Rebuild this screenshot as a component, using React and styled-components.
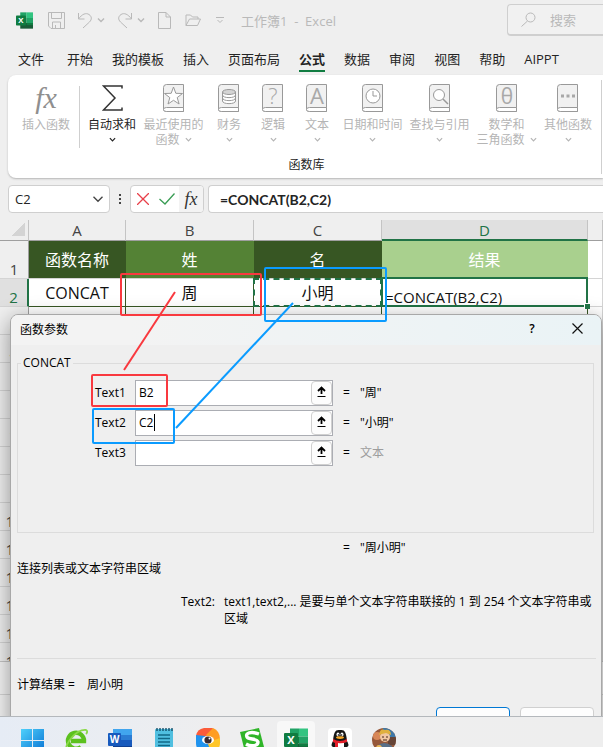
import React from 'react'
import styled, { createGlobalStyle, css } from 'styled-components'

const GlobalStyle = createGlobalStyle`
  * {
    box-sizing: border-box;
  }
  body {
    margin: 0;
    overflow: hidden;
    background: #efefef;
    color: #242424;
    font-family: 'Open Sans', 'Noto Sans CJK SC', sans-serif;
    font-size: 12px;
  }
  button, input {
    font: inherit;
    color: inherit;
  }
  svg {
    display: block;
    flex: none;
  }
`

const Desktop = styled.div`
  height: 100vh;
  display: flex;
  flex-direction: column;
`

const Workbook = styled.main`
  position: relative;
  flex: 1;
  min-height: 0;
  overflow: hidden;
  display: flex;
  flex-direction: column;
`

/* title bar */

const TitleBar = styled.header`
  display: flex;
  align-items: center;
  flex: none;
  height: 40px;
  padding-left: 16px;
  color: #b9b9b9;
`

const QuickButton = styled.button`
  display: flex;
  align-items: center;
  justify-content: center;
  flex: none;
  width: ${({ $width }) => $width || 24}px;
  height: 24px;
  padding: 0;
  border: 0;
  background: none;
`

const SplitButton = styled.span`
  display: flex;
  align-items: center;
  margin-left: 8px;
`

const AppIcon = styled.span`
  margin-right: 15px;
`

const DocTitle = styled.h1`
  margin: 0 0 0 4px;
  flex: 1;
  font-size: 13px;
  font-weight: 400;
  white-space: pre;
`

const Search = styled.label`
  display: flex;
  align-items: center;
  gap: 14px;
  flex: none;
  width: 96px;
  height: 32px;
  padding-left: 13px;
  border: 1px solid #cfcfcf;
  border-right: 0;
  border-bottom-width: 2px;
  border-radius: 4px 0 0 4px;
  background: #f1f1f1;
  input {
    width: 50px;
    padding: 0;
    border: 0;
    outline: 0;
    background: none;
    font-size: 13px;
  }
  input::placeholder {
    color: #b9b9b9;
  }
`

/* ribbon */

const Tabs = styled.nav`
  display: flex;
  flex: none;
  gap: 19px;
  height: 35px;
  padding: 6px 0 0 18px;
  white-space: nowrap;
`

const Tab = styled.a`
  height: 26px;
  line-height: 26px;
  font-size: 13px;
  color: #242424;
  text-decoration: none;
  ${({ $first }) => $first && 'margin-right: 4px;'}
  ${({ $active }) =>
    $active &&
    css`
      font-weight: 700;
      border-bottom: 2px solid #107c41;
    `}
`

const Ribbon = styled.section`
  flex: none;
  height: 103px;
  margin-left: 8px;
  padding: 5px 1px 4px 10px;
  border-radius: 8px 0 0 8px;
  background: #fff;
  box-shadow: 0 1px 2px #b5b5b5;
`

const RibbonGroup = styled.div`
  display: flex;
  flex-direction: column;
  justify-content: space-between;
  height: 100%;
  padding-top: 3px;
  border-right: 1px solid #cfcfcf;
`

const Commands = styled.div`
  display: flex;
`

const Divider = styled.span`
  width: 1px;
  height: 62px;
  margin: 3px 4px 0 5px;
  background: #cfcfcf;
`

const Command = styled.button`
  display: flex;
  flex-direction: column;
  align-items: center;
  flex: none;
  width: ${({ $width }) => $width}px;
  padding: 0;
  border: 0;
  background: none;
  line-height: 15px;
  white-space: nowrap;
  color: ${({ $enabled }) => ($enabled ? '#242424' : '#b5b5b5')};
`

const CommandIcon = styled.span`
  display: flex;
  align-items: center;
  justify-content: center;
  height: 30px;
  margin-bottom: 4px;
`

const CommandLine = styled.span`
  display: flex;
  align-items: center;
  gap: 5px;
  height: 15px;
`

const Fx = styled.span`
  font-family: 'Liberation Serif', serif;
  font-style: italic;
  font-size: ${({ $size }) => $size}px;
  line-height: 1;
  color: ${({ $color }) => $color};
`

const GroupName = styled.span`
  padding-right: 6px;
  text-align: center;
  line-height: 18px;
`

/* formula bar */

const FormulaBar = styled.section`
  display: flex;
  flex: none;
  height: 28px;
  margin: 7px 0 7px 8px;
`

const NameBox = styled.label`
  display: flex;
  align-items: center;
  width: 102px;
  padding: 0 5px 0 6px;
  border: 1px solid #cfcfcf;
  border-radius: 4px;
  background: #fff;
  input {
    flex: 1;
    min-width: 0;
    padding: 0;
    border: 0;
    outline: 0;
    font-size: 13px;
    background: none;
  }
`

const Grip = styled.span`
  display: flex;
  flex-direction: column;
  align-items: center;
  justify-content: center;
  gap: 2px;
  width: 20px;
  i {
    width: 2px;
    height: 2px;
    background: #444;
  }
`

const EntryButtons = styled.div`
  display: flex;
  width: 74px;
  margin-right: 4px;
  border: 1px solid #cfcfcf;
  border-radius: 4px;
  overflow: hidden;
  background: #fff;
`

const EntryButton = styled.button`
  display: flex;
  align-items: center;
  justify-content: center;
  flex: 1;
  padding: 0;
  border: 0;
  background: ${({ $hover }) => ($hover ? '#f3f3f3' : 'none')};
`

const FormulaInput = styled.input`
  flex: 1;
  min-width: 0;
  padding: 0 11px;
  border: 1px solid #cfcfcf;
  border-right: 0;
  border-radius: 4px 0 0 4px;
  outline: 0;
  background: #fff;
  && {
    font-family: Lato, sans-serif;
    font-size: 14px;
    font-weight: 700;
  }
`

/* sheet */

const SheetArea = styled.div`
  flex: 1;
  min-height: 0;
  overflow: hidden;
`

const Sheet = styled.table`
  width: 100%;
  table-layout: fixed;
  border-collapse: separate;
  border-spacing: 0;
  background: #fff;
  font-size: 16px;
`

const Col = styled.col`
  width: ${({ $width }) => $width}px;
`

const ColumnHead = styled.th`
  height: 21px;
  padding: 0;
  line-height: 18px;
  font-size: 15px;
  font-weight: 400;
  color: ${({ $active }) => ($active ? '#217346' : '#444')};
  background: ${({ $active }) => ($active ? '#e0e0e0' : '#efefef')};
  border-right: 1px solid #c4c4c4;
  border-bottom: ${({ $active }) => ($active ? '2px solid #217346' : '1px solid #9f9f9f')};
`

const Corner = styled(ColumnHead)`
  background: linear-gradient(135deg, transparent 50%, #d4d4d4 50%) 12px 3px / 13px 13px no-repeat #efefef;
`

const RowHead = styled.th`
  height: ${({ $height }) => $height || 28}px;
  padding: 0;
  vertical-align: bottom;
  line-height: 17px;
  font-size: 15px;
  font-weight: 400;
  color: ${({ $active }) => ($active ? '#217346' : '#444')};
  background: ${({ $active }) => ($active ? '#e0e0e0' : '#efefef')};
  border-bottom: 1px solid #d4d4d4;
  border-right: ${({ $active }) => ($active ? '2px solid #217346' : '1px solid #9f9f9f')};
`

const Cell = styled.td`
  position: relative;
  padding: 0;
  text-align: ${({ $align }) => $align || 'center'};
  line-height: 20px;
  white-space: nowrap;
  color: ${({ $fill }) => ($fill ? '#fff' : '#111')};
  background: ${({ $fill }) => $fill || '#fff'};
  border-right: 1px solid ${({ $ruled, $fill }) => $fill || ($ruled ? '#375623' : '#d4d4d4')};
  border-bottom: 1px solid ${({ $ruled }) => ($ruled ? '#375623' : '#d4d4d4')};
  ${({ $copied }) =>
    $copied &&
    css`
      &::after {
        content: '';
        position: absolute;
        inset: -1px;
        border: 2px dashed #217346;
      }
    `}
  ${({ $editing }) =>
    $editing &&
    css`
      padding: 8px 0 0 3px;
      line-height: 18px;
      font-size: 15px;
      &::after {
        content: '';
        position: absolute;
        inset: -2px -1px -1px;
        border: 2px solid #217346;
      }
    `}
`

const FillHandle = styled.i`
  position: absolute;
  right: -3px;
  bottom: -3px;
  z-index: 1;
  width: 6px;
  height: 6px;
  border: 1px solid #fff;
  border-width: 1px 0 0 1px;
  background: #217346;
`

const StatusArea = styled.footer`
  flex: none;
  height: 55px;
  background: linear-gradient(#d4d4d4, #d4d4d4) 0 32px / 100% 1px no-repeat #f3f3f3;
  border-top: 1px solid #c4c4c4;
`

/* dialog */

const Dialog = styled.form`
  position: absolute;
  top: 314px;
  left: 10px;
  right: 1px;
  border: 1px solid #a8a8a8;
  border-radius: 8px 8px 0 0;
  background: #efefef;
  box-shadow: 0 6px 22px rgba(0, 0, 0, 0.4);
  overflow: hidden;
  color: #000;
`

const DialogTitle = styled.div`
  display: flex;
  align-items: center;
  height: 30px;
  padding: 0 18px 3px 9px;
  background: linear-gradient(90deg, #f3f3f3 20%, #eaf3f6);
  h2 {
    flex: 1;
    margin: 0;
    font-size: 12px;
    font-weight: 400;
  }
`

const TitleButton = styled.button`
  display: flex;
  align-items: center;
  justify-content: center;
  width: 12px;
  height: 20px;
  margin-left: 33px;
  padding: 0;
  border: 0;
  background: none;
  font-weight: 600;
`

const DialogBody = styled.div`
  padding: 9px 7px 0 6px;
`

const ArgGroup = styled.fieldset`
  height: 179px;
  min-width: 0;
  margin: 0;
  padding: 8px 0 0 77px;
  border: 1px solid #dcdcdc;
  legend {
    margin-left: -74px;
    padding: 0 2px;
    line-height: 18px;
  }
`

const ArgRow = styled.div`
  display: flex;
  align-items: center;
  height: 26px;
  margin-bottom: 4px;
  padding-bottom: 2px;
  label {
    width: 40px;
  }
`

const RefBox = styled.div`
  position: relative;
  display: flex;
  width: 198px;
  height: 26px;
  margin-bottom: -2px;
  border: 1px solid #abadb3;
  background: #fff;
  input {
    flex: 1;
    min-width: 0;
    padding: 0 3px 2px;
    border: 0;
    outline: 0;
    background: none;
  }
`

const Caret = styled.i`
  position: absolute;
  left: 18px;
  top: 3px;
  width: 1px;
  height: 17px;
  background: #000;
`

const PickButton = styled.button`
  display: flex;
  align-items: center;
  justify-content: center;
  width: 21px;
  padding: 0 0 3px;
  border: 1px solid #d0d0d0;
  border-radius: 4px;
  background: #fdfdfd;
`

const Equals = styled.span`
  width: 17px;
  margin-left: 10px;
`

const ArgValue = styled.output`
  color: ${({ $muted }) => ($muted ? '#9d9d9d' : '#000')};
`

const ResultRow = styled.div`
  display: flex;
  height: 18px;
  margin-top: 6px;
  padding-left: 316px;
  line-height: 18px;
`

const Description = styled.p`
  margin: 3px 0 15px;
  line-height: 18px;
`

const ArgHelp = styled.dl`
  display: flex;
  gap: 9px;
  height: 66px;
  margin: 0 -2px 0 0;
  padding-left: 164px;
  border-bottom: 1px solid #dcdcdc;
  line-height: 17px;
  dt {
    flex: none;
  }
  dd {
    margin: 0;
  }
`

const Outcome = styled.p`
  display: flex;
  gap: 12px;
  margin: 17px 0 13px;
  line-height: 18px;
`

const DialogActions = styled.div`
  display: flex;
  justify-content: flex-end;
  gap: 10px;
`

const ActionButton = styled.button`
  width: 74px;
  height: 24px;
  border: 1px solid ${({ $primary }) => ($primary ? '#0078d4' : '#d0d0d0')};
  border-radius: 4px;
  background: #fdfdfd;
`

const Annotations = styled.svg`
  position: absolute;
  top: 0;
  left: 0;
  fill: none;
  stroke-width: 2;
  stroke-linejoin: round;
  pointer-events: none;
`

/* taskbar */

const Taskbar = styled.nav`
  display: flex;
  align-items: flex-start;
  flex: none;
  gap: 6px;
  height: 31px;
  padding: 4px 0 0 13px;
  overflow: hidden;
  border-top: 1px solid #b4b8bc;
  background: linear-gradient(90deg, #e6ecf5, #eeeeef 35%, #eeeeee);
`

const TaskButton = styled.button`
  display: flex;
  justify-content: center;
  flex: none;
  width: 38px;
  height: 38px;
  padding: 7px 0 0;
  border: 0;
  border-radius: 4px;
  background: ${({ $active }) => ($active ? '#f8f8f8' : 'none')};
`

const Chevron = ({ color = 'currentColor', size = 7, weight = 1.4 }) => (
  <svg width={size} height={size} viewBox="0 0 8 8" fill="none" stroke={color} strokeWidth={weight}>
    <path d="M1 2.5l3 3 3-3" />
  </svg>
)

const ExcelIcon = ({ size }) => (
  <svg width={size} height={size} viewBox="0 0 24 24">
    <path d="M6 .5h9v8H6z" fill="#21a366" />
    <path d="M15 .5h9v8h-9z" fill="#33c481" />
    <path d="M6 8.500h9v7H6z" fill="#107c41" />
    <path d="M15 8.500h9v7h-9z" fill="#21a366" />
    <path d="M6 15.500h18v8H6z" fill="#185c37" />
    <path d="M15 15.500h9v3h-9z" fill="#107c41" />
    <rect x="0" y="5" width="14" height="14" rx="1" fill="#107c41" />
    <text x="7" y="16" textAnchor="middle" fontFamily="Open Sans" fontWeight="700" fontSize="11" fill="#fff">
      X
    </text>
  </svg>
)

const WordIcon = () => (
  <svg width="24" height="24" viewBox="0 0 24 24">
    <path d="M5 1h19v6H5z" fill="#41a5ee" />
    <path d="M5 7h19v5H5z" fill="#2b7cd3" />
    <path d="M5 12h19v6H5z" fill="#185abd" />
    <path d="M5 18h19v5H5z" fill="#103f91" />
    <rect x="0" y="5" width="13" height="13" rx="1" fill="#185abd" />
    <text x="6.5" y="15" textAnchor="middle" fontFamily="Open Sans" fontWeight="700" fontSize="10" fill="#fff">
      W
    </text>
  </svg>
)

const StartIcon = () => (
  <svg width="24" height="24" viewBox="0 0 24 24">
    <defs>
      <linearGradient id="start" x1="0" y1="0" x2="1" y2="1">
        <stop offset="0" stopColor="#4fd0fb" />
        <stop offset="1" stopColor="#0a74d4" />
      </linearGradient>
    </defs>
    <path d="M1 1h11v11H1zM13 1h11v11H13zM1 13h11v11H1zM13 13h11v11H13z" fill="url(#start)" />
  </svg>
)

const BrowserIcon = () => (
  <svg width="24" height="24" viewBox="0 0 24 24" fill="none">
    <path d="M7 13h13a8 8 0 1 0-3 6" stroke="#5cc11f" strokeWidth="4.4" />
    <path d="M3 22C-1 18 12 1 22 2c2 1 1 3 0 4" stroke="#8bd94a" strokeWidth="1.8" />
  </svg>
)

const NotesIcon = () => (
  <svg width="24" height="24" viewBox="0 0 24 24" fill="none">
    <rect x="3" y="1" width="18" height="22" rx="1" fill="#50bfe0" />
    <path d="M5 0v3M8 0v3M11 0v3M14 0v3M17 0v3M20 0v3" stroke="#14506b" strokeWidth="1.4" />
    <path d="M6 7h12M6 10.5h12M6 14h12M6 17.5h12" stroke="#116987" strokeWidth="1.3" />
  </svg>
)

const EyeIcon = () => (
  <svg width="24" height="24" viewBox="0 0 24 24">
    <path d="M8 0h9l-4 9-13-1q1-7 8-8z" fill="#fb5b3a" />
    <path d="M17 0q7 3 7 11l-10 3-4-7z" fill="#ff9d22" />
    <path d="M24 10v6q-1 8-9 8l-5-9z" fill="#ffc629" />
    <path d="M0 7l9 1 6 16H8q-8-1-8-9z" fill="#2093ee" />
    <ellipse cx="12" cy="12" rx="6" ry="4" fill="#fff" />
    <circle cx="12" cy="12" r="3.6" fill="#392b31" />
    <circle cx="13.5" cy="10.5" r="1" fill="#fff" />
  </svg>
)

const SIcon = () => (
  <svg width="24" height="24" viewBox="0 0 24 24" fill="none">
    <path d="M0 4L19 0l5 19-19 5z" fill="#2fb528" />
    <path d="M19 6C11 3 5 5 7 9c2 3 10 1 11 5 0 4-7 5-12 2" stroke="#fff" strokeWidth="3.4" />
  </svg>
)

const PenguinIcon = () => (
  <svg width="24" height="24" viewBox="0 0 24 24">
    <rect width="24" height="24" rx="4" fill="#fff" />
    <path d="M5 19q-3-1 0-6C6 2 8 2 12 2s6 0 7 11q3 5 0 6l-3 3H8z" fill="#161616" />
    <path d="M8 14h8v7H8z" fill="#fff" />
    <ellipse cx="10" cy="6.5" rx="1.5" ry="2" fill="#fff" />
    <ellipse cx="14" cy="6.5" rx="1.5" ry="2" fill="#fff" />
    <circle cx="10.4" cy="7" r=".8" />
    <circle cx="13.6" cy="7" r=".8" />
    <ellipse cx="12" cy="9.6" rx="4" ry="1.3" fill="#f5a623" />
    <path d="M5 11q7 4 14 0v3q-5 2-9 1v4H7v-4l-2-1z" fill="#e5202b" />
  </svg>
)

const GameIcon = () => (
  <svg width="24" height="24" viewBox="0 0 24 24">
    <defs>
      <clipPath id="disc">
        <circle cx="12" cy="12" r="12" />
      </clipPath>
    </defs>
    <g clipPath="url(#disc)">
      <path d="M0 0h24v24H0z" fill="#96583a" />
      <path d="M11 0h13v9H11z" fill="#3e78a8" />
      <circle cx="5" cy="8" r="4" fill="#d88758" />
      <path d="M16 9h8v8h-8z" fill="#664437" />
      <path d="M5 18q7-6 15 0v6H4z" fill="#586f88" />
      <circle cx="13" cy="9" r="5" fill="#f1c7a2" />
      <path d="M7 7q1-7 6-5 6-1 6 5l-5-2-4 1z" fill="#dfb03f" />
      <path d="M10 9h2M14 9h2M11 12h4" stroke="#49291e" />
      <circle cx="7" cy="20" r="3" fill="#eeba58" />
    </g>
  </svg>
)

const BookIcon = ({ children }) => (
  <svg width="22" height="29" viewBox="0 0 22 29" fill="none" stroke="#999">
    <path d="M3.5.5h17v27h-17q-3 0-3-2v-22q0-3 3-3z" fill="#f1f1f1" />
    <path d="M.5 25.5q0-2 3-2h17v4h-17q-3 0-3-2z" fill="#fff" />
    {children}
  </svg>
)

const bookText = {
  x: 11,
  textAnchor: 'middle',
  fill: '#a8a8a8',
  stroke: 'none',
  fontFamily: 'Open Sans',
}

const commands = [
  {
    lines: ['最近使用的', '函数'],
    width: 67,
    art: <path d="M10.5 3l2.300 6.300 6.700.2-5.300 4.100 1.900 6.400-5.600-3.700L5 20l1.800-6.400-5.300-4.100 6.700-.2z" fill="#fff" />,
  },
  {
    lines: ['财务'],
    width: 44,
    art: (
      <g>
        <path d="M4.5 8v9c0 3.500 13 3.500 13 0V8" fill="#fff" />
        <path d="M4.5 11c0 3.500 13 3.500 13 0M4.5 14c0 3.500 13 3.500 13 0" />
        <ellipse cx="11" cy="8" rx="6.5" ry="2.5" fill="#d4d4d4" />
      </g>
    ),
  },
  {
    lines: ['逻辑'],
    width: 44,
    art: (
      <text {...bookText} y="20" fontSize="22" fontWeight="300">
        ?
      </text>
    ),
  },
  {
    lines: ['文本'],
    width: 44,
    art: (
      <text {...bookText} y="20" fontSize="22">
        A
      </text>
    ),
  },
  {
    lines: ['日期和时间'],
    width: 67,
    art: (
      <g>
        <circle cx="11" cy="12" r="7" fill="#fff" />
        <path d="M11 7v5h4" />
      </g>
    ),
  },
  {
    lines: ['查找与引用'],
    width: 67,
    art: (
      <g>
        <circle cx="10" cy="11" r="5.5" fill="#fff" />
        <path d="M14 15l5 5" strokeWidth="1.5" />
      </g>
    ),
  },
  {
    lines: ['数学和', '三角函数'],
    width: 67,
    art: (
      <text {...bookText} y="20" fontSize="21">
        θ
      </text>
    ),
  },
  {
    lines: ['其他函数'],
    width: 56,
    art: <path d="M4 10.5h3v3H4zM9.5 10.5h3v3h-3zM15 10.5h3v3h-3z" fill="#a8a8a8" stroke="none" />,
  },
]

const tabs = ['文件', '开始', '我的模板', '插入', '页面布局', '公式', '数据', '审阅', '视图', '帮助', 'AIPPT']

const args = [
  { name: 'Text1', value: 'B2', result: '"周"' },
  { name: 'Text2', value: 'C2', result: '"小明"', focused: true },
  { name: 'Text3', value: '', result: '文本', muted: true },
]

const tasks = [
  { name: '开始', icon: <StartIcon /> },
  { name: '浏览器', icon: <BrowserIcon /> },
  { name: 'Word', icon: <WordIcon /> },
  { name: '记事本', icon: <NotesIcon /> },
  { name: '看图', icon: <EyeIcon /> },
  { name: '输入法', icon: <SIcon /> },
  { name: 'Excel', icon: <ExcelIcon size={24} />, active: true },
  { name: 'QQ', icon: <PenguinIcon /> },
  { name: '游戏', icon: <GameIcon /> },
]

const line = { fill: 'none', stroke: 'currentColor' }

const TopBar = () => (
  <TitleBar>
    <AppIcon>
      <ExcelIcon size={17} />
    </AppIcon>
    <QuickButton $width={17} aria-label="保存">
      <svg width="17" height="17" viewBox="0 0 17 17" {...line}>
        <path d="M.5.5h16v16H3L.5 14zM3.5.5v6h10v-6M4.5 16v-6h8v6M7.5 16v-3" />
      </svg>
    </QuickButton>
    <SplitButton>
      <QuickButton aria-label="撤销">
        <svg width="16" height="17" viewBox="0 0 16 17" {...line}>
          <path d="M1.5 1v6h6M1.5 7C5 2 9 .5 12 2.5c3 2 3 5 .5 7.500L6 16" />
        </svg>
      </QuickButton>
      <Chevron size={8} />
    </SplitButton>
    <SplitButton>
      <QuickButton aria-label="恢复">
        <svg width="16" height="17" viewBox="0 0 16 17" {...line}>
          <path d="M14.5 1v6h-6M14.5 7C11 2 7 .5 4 2.5c-3 2-3 5-.5 7.500L10 16" />
        </svg>
      </QuickButton>
      <Chevron size={8} />
    </SplitButton>
    <QuickButton $width={38} aria-label="新建">
      <svg width="13" height="17" viewBox="0 0 13 17" {...line}>
        <path d="M.5.5H8L12.5 5v11.500H.5zM8 .5V5h4.500" />
      </svg>
    </QuickButton>
    <QuickButton $width={20} aria-label="打开">
      <svg width="16" height="13" viewBox="0 0 16 13" {...line}>
        <path d="M1 11.500V1h4.500l2 2H13v2M1 11.500L4.500 5h11l-3 6.500z" />
      </svg>
    </QuickButton>
    <QuickButton $width={34} aria-label="自定义快速访问工具栏">
      <svg width="8" height="8" viewBox="0 0 8 8" {...line}>
        <path d="M0 1.500h8M1.500 4L4 6.500 6.500 4" />
      </svg>
    </QuickButton>
    <DocTitle>{'工作簿1  -  Excel'}</DocTitle>
    <Search>
      <svg width="15" height="15" viewBox="0 0 15 15" {...line}>
        <circle cx="9.5" cy="5.5" r="4.5" />
        <path d="M6.500 9L.5 14.500" />
      </svg>
      <input aria-label="搜索" placeholder="搜索" />
    </Search>
  </TitleBar>
)

const RibbonPanel = () => (
  <Ribbon>
    <RibbonGroup>
      <Commands>
        <Command $width={56}>
          <CommandIcon>
            <Fx $size={30} $color="#8f8f8f">
              fx
            </Fx>
          </CommandIcon>
          <CommandLine>插入函数</CommandLine>
        </Command>
        <Divider />
        <Command $width={56} $enabled>
          <CommandIcon>
            <svg width="21" height="26" viewBox="0 0 21 26" fill="none" stroke="#333" strokeWidth="1.5">
              <path d="M20 3.500V1H1.500L13 13 1.500 25H20v-2.500" />
            </svg>
          </CommandIcon>
          <CommandLine>自动求和</CommandLine>
          <CommandLine>
            <Chevron />
          </CommandLine>
        </Command>
        {commands.map(({ lines, width, art }) => (
          <Command key={lines[0]} $width={width}>
            <CommandIcon>
              <BookIcon>{art}</BookIcon>
            </CommandIcon>
            <CommandLine>{lines[0]}</CommandLine>
            <CommandLine>
              {lines[1]}
              <Chevron />
            </CommandLine>
          </Command>
        ))}
      </Commands>
      <GroupName>函数库</GroupName>
    </RibbonGroup>
  </Ribbon>
)

const Grid = () => (
  <Sheet>
    <colgroup>
      <Col $width={29} />
      <Col $width={97} />
      <Col $width={128} />
      <Col $width={128} />
      <Col $width={206} />
      <col />
    </colgroup>
    <thead>
      <tr>
        <Corner />
        <ColumnHead>A</ColumnHead>
        <ColumnHead>B</ColumnHead>
        <ColumnHead>C</ColumnHead>
        <ColumnHead $active>D</ColumnHead>
        <ColumnHead />
      </tr>
    </thead>
    <tbody>
      <tr>
        <RowHead $height={38}>1</RowHead>
        <Cell $fill="#375623">函数名称</Cell>
        <Cell $fill="#548235">姓</Cell>
        <Cell $fill="#375623">名</Cell>
        <Cell $fill="#a9d08e">结果</Cell>
        <Cell />
      </tr>
      <tr>
        <RowHead $active>2</RowHead>
        <Cell $ruled>CONCAT</Cell>
        <Cell $ruled>周</Cell>
        <Cell $ruled $copied>
          小明
        </Cell>
        <Cell $ruled $editing $align="left">
          =CONCAT(B2,C2)
          <FillHandle />
        </Cell>
        <Cell />
      </tr>
      {Array.from({ length: 13 }, (_, i) => (
        <tr key={i}>
          <RowHead>{i + 3}</RowHead>
          <Cell $ruled={i === 0} />
          <Cell $ruled={i === 0} />
          <Cell $ruled={i === 0} />
          <Cell $ruled={i === 0} />
          <Cell />
        </tr>
      ))}
    </tbody>
  </Sheet>
)

const ArgumentsDialog = () => (
  <Dialog onSubmit={e => e.preventDefault()}>
    <DialogTitle>
      <h2>函数参数</h2>
      <TitleButton type="button">?</TitleButton>
      <TitleButton type="button" aria-label="关闭">
        <svg width="11" height="11" viewBox="0 0 11 11" stroke="#111" strokeWidth="1.2">
          <path d="M.5.5l10 10M10.5.5l-10 10" />
        </svg>
      </TitleButton>
    </DialogTitle>
    <DialogBody>
      <ArgGroup>
        <legend>CONCAT</legend>
        {args.map(({ name, value, result, muted, focused }) => (
          <ArgRow key={name}>
            <label htmlFor={name}>{name}</label>
            <RefBox>
              <input id={name} defaultValue={value} />
              {focused && <Caret />}
              <PickButton type="button" aria-label={`选择 ${name}`}>
                <svg width="9" height="11" viewBox="0 0 9 11" fill="none" stroke="#000" strokeWidth="1.8">
                  <path d="M4.5 8V1.500M1 5l3.500-3.500L8 5" />
                  <path d="M.5 10.500h8" strokeWidth="1" />
                </svg>
              </PickButton>
            </RefBox>
            <Equals>=</Equals>
            <ArgValue $muted={muted}>{result}</ArgValue>
          </ArgRow>
        ))}
      </ArgGroup>
      <ResultRow>
        <Equals>=</Equals>
        <ArgValue>"周小明"</ArgValue>
      </ResultRow>
      <Description>连接列表或文本字符串区域</Description>
      <ArgHelp>
        <dt>Text2:</dt>
        <dd>text1,text2,... 是要与单个文本字符串联接的 1 到 254 个文本字符串或区域</dd>
      </ArgHelp>
      <Outcome>
        <span>计算结果 =</span>
        <span>周小明</span>
      </Outcome>
      <DialogActions>
        <ActionButton $primary aria-label="确定" />
        <ActionButton type="button" aria-label="取消" />
      </DialogActions>
    </DialogBody>
  </Dialog>
)

const App = () => (
  <Desktop>
    <GlobalStyle />
    <Workbook>
      <TopBar />
      <Tabs>
        {tabs.map((tab, i) => (
          <Tab key={tab} href="#" $first={i === 0} $active={tab === '公式'}>
            {tab}
          </Tab>
        ))}
      </Tabs>
      <RibbonPanel />
      <FormulaBar>
        <NameBox>
          <input aria-label="名称框" defaultValue="C2" />
          <Chevron size={12} weight={0.9} color="#444" />
        </NameBox>
        <Grip>
          <i />
          <i />
          <i />
        </Grip>
        <EntryButtons>
          <EntryButton aria-label="取消">
            <svg width="12" height="12" viewBox="0 0 12 12" stroke="#e8404a" strokeWidth="1.3">
              <path d="M0 0l12 12M12 0L0 12" />
            </svg>
          </EntryButton>
          <EntryButton aria-label="输入">
            <svg width="16" height="12" viewBox="0 0 16 12" fill="none" stroke="#3a9d55" strokeWidth="1.3">
              <path d="M.5 6L6 11 15.5.5" />
            </svg>
          </EntryButton>
          <EntryButton $hover>
            <Fx $size={18} $color="#333">
              fx
            </Fx>
          </EntryButton>
        </EntryButtons>
        <FormulaInput aria-label="编辑栏" defaultValue="=CONCAT(B2,C2)" />
      </FormulaBar>
      <SheetArea>
        <Grid />
      </SheetArea>
      <StatusArea />
      <ArgumentsDialog />
      <Annotations width="603" height="480">
        <g stroke="#f9393f">
          <rect x="121" y="274" width="140" height="41" rx="1" />
          <rect x="92" y="375" width="75" height="31" rx="1" />
          <path d="M175 292L124 370" />
        </g>
        <g stroke="#0a9bff">
          <rect x="265" y="268" width="121" height="53" rx="1" />
          <rect x="93" y="409" width="81" height="34" rx="1" />
          <path d="M293 303L176 428" />
        </g>
      </Annotations>
    </Workbook>
    <Taskbar>
      {tasks.map(({ name, icon, active }) => (
        <TaskButton key={name} aria-label={name} $active={active}>
          {icon}
        </TaskButton>
      ))}
    </Taskbar>
  </Desktop>
)

export default App
